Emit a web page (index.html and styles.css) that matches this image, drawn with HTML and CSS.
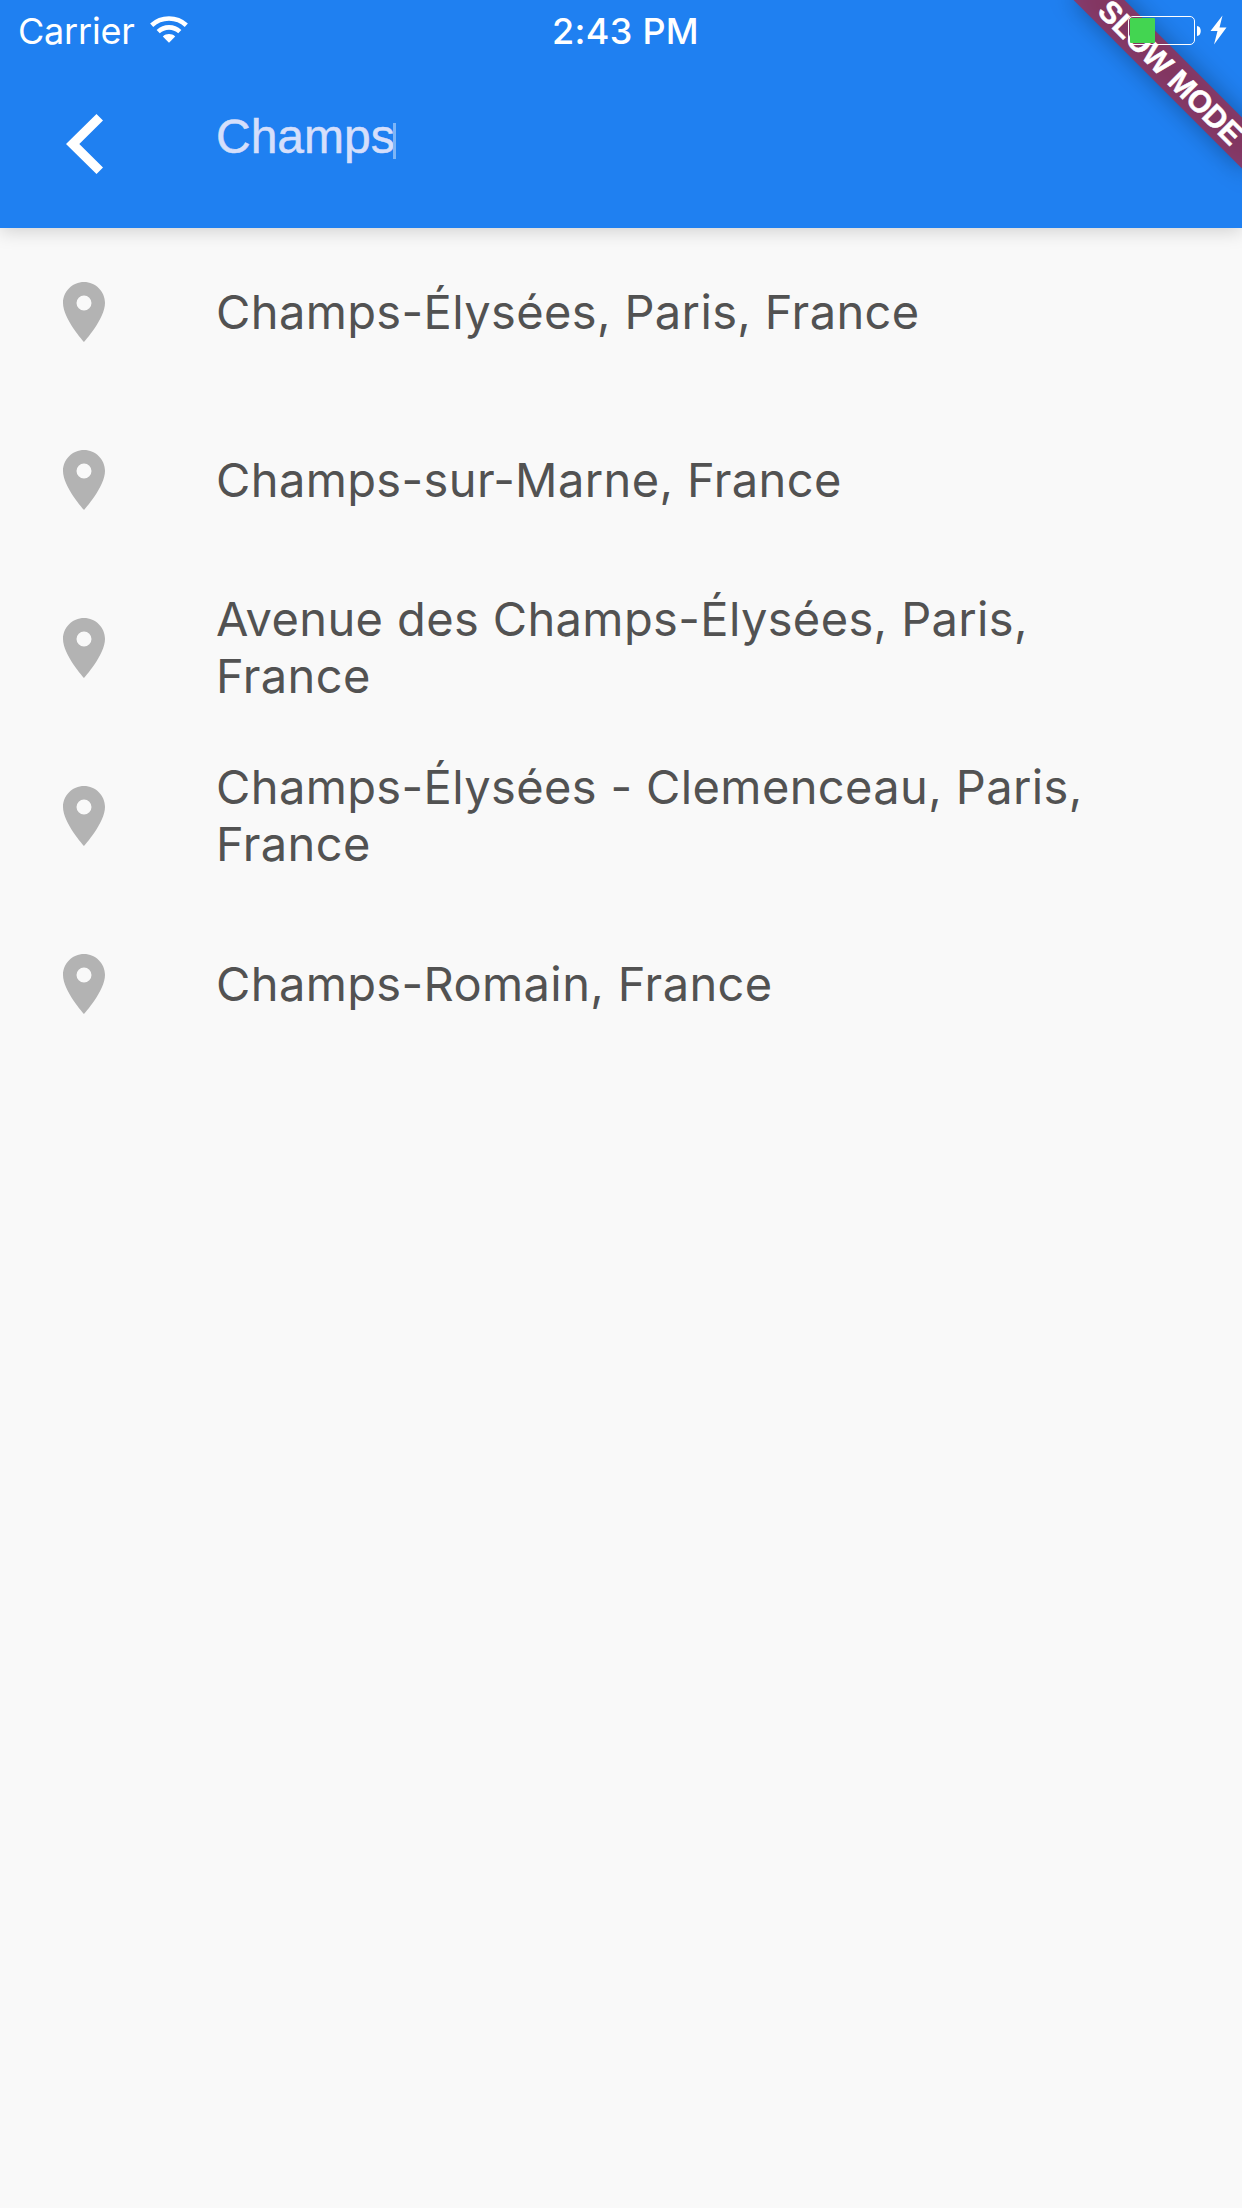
FILE: index.html
```html
<!DOCTYPE html>
<html lang="en">
<head>
<meta charset="utf-8">
<title>Place search</title>
<link rel="stylesheet" href="styles.css">
</head>
<body>
<svg class="defs" aria-hidden="true">
  <symbol id="pin" viewBox="0 0 24 24"><path d="M12 2C8.13 2 5 5.13 5 9c0 5.25 7 13 7 13s7-7.75 7-13c0-3.87-3.13-7-7-7zm0 9.5a2.5 2.5 0 0 1 0-5 2.5 2.5 0 0 1 0 5z"/></symbol>
</svg>
<div class="screen">
  <div class="ribbon-corner"><div class="ribbon"><span class="ribbon-label">SLOW MODE</span></div></div>
  <header class="app-bar">
    <div class="status-bar">
      <div class="carrier">
        <span class="carrier-name">Carrier</span>
        <svg class="wifi" viewBox="0 0 38 28" fill="none" stroke="#fff">
          <path stroke-width="4.6" d="M1.7 9.2C11.3.3 26.7.3 36.3 9.2"/>
          <path stroke-width="4.6" d="M8.2 15.6C14.4 9.9 23.6 9.9 29.8 15.6"/>
          <path fill="#fff" stroke="none" d="M12.8 20.4C16.3 17.2 21.7 17.2 25.2 20.4L19 26.8Z"/>
        </svg>
      </div>
      <span class="time">2:43 PM</span>
      <svg class="battery" viewBox="0 0 102 32">
        <rect x="1.5" y="3.5" width="66" height="28" rx="4.5" fill="none" stroke="#fff"/>
        <rect x="3" y="5" width="25" height="25" rx="1" fill="#43d551"/>
        <path fill="#fff" d="M70 13c5 0 5 10 0 10z"/>
        <path fill="#fff" d="M95.5 2.5 83.5 18H90.5L87 31.5 99.5 14.5H92.5Z"/>
      </svg>
    </div>
    <div class="toolbar">
      <svg class="back" viewBox="0 0 38 60"><path fill="#fff" d="M30.5 0 37 6.5 13.3 30 37 53.5 30.5 60 0 30Z"/></svg>
      <div class="query"><span class="query-text">Champs</span><i class="caret"></i></div>
    </div>
  </header>
  <main class="results">
    <div class="result"><svg class="pin"><use href="#pin"/></svg><span class="place">Champs-Élysées, Paris, France</span></div>
    <div class="result"><svg class="pin"><use href="#pin"/></svg><span class="place">Champs-sur-Marne, France</span></div>
    <div class="result"><svg class="pin"><use href="#pin"/></svg><span class="place">Avenue des Champs-Élysées, Paris,<br>France</span></div>
    <div class="result"><svg class="pin"><use href="#pin"/></svg><span class="place">Champs-Élysées - Clemenceau, Paris,<br>France</span></div>
    <div class="result"><svg class="pin"><use href="#pin"/></svg><span class="place">Champs-Romain, France</span></div>
  </main>
</div>
</body>
</html>
```

FILE: styles.css
```css
body { margin: 0; background: #f9f9f9; font-family: Inter, "Liberation Sans", sans-serif; }
.defs { display: none; }
.screen { position: relative; width: 1242px; height: 2208px; overflow: hidden; background: #f9f9f9; isolation: isolate; }

.app-bar { height: 228px; background: #1f80f1; box-shadow: 0 3px 18px rgba(0, 0, 0, .17); display: flex; flex-direction: column; }
.status-bar { position: relative; z-index: 3; height: 60px; color: #fff; font-size: 36px; line-height: 60px; display: grid; grid-template-columns: 1fr auto 1fr; align-items: start; padding: 0 13px 0 18px; }
.carrier { display: flex; align-items: flex-start; gap: 15px; padding-top: 1px; }
.carrier-name { letter-spacing: -.2px; }
.wifi { width: 38px; height: 28px; margin-top: 15px; }
.time { font-weight: 500; letter-spacing: .3px; padding: 1px 0 0 4px; }
.battery { width: 102px; height: 32px; margin-top: 13px; justify-self: end; }

.toolbar { flex: 1; display: flex; align-items: flex-start; padding: 54px 0 0 66px; }
.back { width: 38px; height: 60px; flex: none; }
.query { display: flex; align-items: flex-start; margin-left: 112px; font: 48px/54px "Liberation Sans", Arial, sans-serif; color: #d5dffb; margin-top: -4px; }
.query-text { -webkit-text-stroke: .5px #d5dffb; }
.caret { width: 3px; height: 36px; margin: 13px 0 0 -2px; background: #7db5f7; }

.result { height: 168px; display: flex; align-items: center; padding-left: 48px; gap: 96px; }
.pin { width: 72px; height: 72px; flex: none; fill: #b3b3b3; }
.place { font-size: 47px; line-height: 57px; letter-spacing: .38px; color: #525252; white-space: nowrap; margin-top: -2px; }

.ribbon-corner { position: absolute; z-index: 2; top: 0; right: 0; width: 240px; height: 240px; overflow: hidden; }
.ribbon { position: absolute; left: 48.5px; top: 53.5px; width: 240px; height: 36px; transform: rotate(45deg); display: flex; align-items: center; justify-content: center; }
.ribbon::before { content: ""; position: absolute; inset: 0; background: rgba(0, 0, 0, .32); filter: blur(12px); }
.ribbon::after { content: ""; position: absolute; inset: 0; background: rgba(168, 40, 70, .74); }
.ribbon-label { position: relative; z-index: 1; color: #fff; font: bold 30.6px/36px "Liberation Sans", Arial, sans-serif; letter-spacing: -.3px; -webkit-text-stroke: .5px #fff; white-space: nowrap; }
```
